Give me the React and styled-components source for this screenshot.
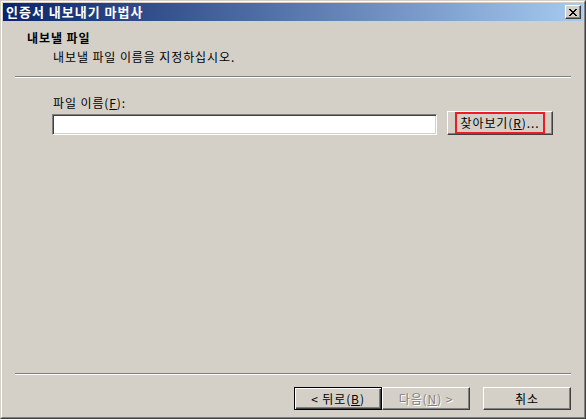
import React from "react";
import styled, { createGlobalStyle, css } from "styled-components";

const Global = createGlobalStyle`
  html, body { margin: 0; padding: 0; background: #d4d0c8; }
  body { font-family: "Noto Sans CJK KR", "Noto Sans", sans-serif; font-size: 12px; color: #000; letter-spacing: 0.9px; }
  * { box-sizing: border-box; }
`;

const Window = styled.div`
  width: 586px;
  height: 419px;
  border: 1px solid;
  border-color: #d4d0c8 #404040 #404040 #d4d0c8;
  background: #d4d0c8;
`;

const Inner = styled.div`
  height: 100%;
  border: 1px solid;
  border-color: #ffffff #808080 #808080 #ffffff;
  padding: 1px;
  display: flex;
  flex-direction: column;
`;

const TitleBar = styled.div`
  height: 18px;
  flex: none;
  display: flex;
  align-items: center;
  justify-content: space-between;
  padding: 0 2px 0 3px;
  background: linear-gradient(to right, #0a246a, #a6caf0);
`;

const Title = styled.span`
  color: #fff;
  font-weight: bold;
  font-size: 13px;
  line-height: 18px;
  letter-spacing: 1px;
`;

const CloseButton = styled.div`
  width: 16px;
  height: 14px;
  background: #d4d0c8;
  border: 1px solid;
  border-color: #ffffff #404040 #404040 #ffffff;
  box-shadow: inset -1px -1px 0 #808080;
  display: flex;
  align-items: center;
  justify-content: center;
`;

const Header = styled.div`
  flex: none;
  padding: 9px 0 11px 24px;
`;

const HeaderTitle = styled.div`
  font-weight: bold;
  line-height: 16px;
`;

const HeaderSub = styled.div`
  margin-top: 3px;
  padding-left: 26px;
  line-height: 16px;
`;

const Separator = styled.div`
  flex: none;
  margin: 0 12px;
  height: 2px;
  border-top: 1px solid #808080;
  border-bottom: 1px solid #ffffff;
`;

const Body = styled.div`
  flex: 1;
  padding: 17px 0 0 49px;
`;

const Label = styled.div`
  line-height: 16px;
  padding-left: 1px;
`;

const FieldRow = styled.div`
  display: flex;
  align-items: flex-start;
  gap: 10px;
`;

const TextInput = styled.div`
  margin-top: 3px;
  width: 385px;
  height: 21px;
  background: #fff;
  border: 1px solid;
  border-color: #808080 #ffffff #ffffff #808080;
  box-shadow: inset 1px 1px 0 #404040, inset -1px -1px 0 #d4d0c8;
`;

const Button = styled.div`
  width: ${(p) => p.$w || 88}px;
  height: ${(p) => p.$h || 23}px;
  display: flex;
  align-items: center;
  justify-content: center;
  line-height: 16px;
  background: #d4d0c8;
  border: 1px solid;
  border-color: #ffffff #404040 #404040 #ffffff;
  box-shadow: inset -1px -1px 0 #808080;
  ${(p) =>
    p.$default &&
    css`
      border-color: #000;
      box-shadow: inset 1px 1px 0 #ffffff, inset -1px -1px 0 #404040, inset -2px -2px 0 #808080;
    `}
  ${(p) =>
    p.$disabled &&
    css`
      color: #808080;
      text-shadow: 1px 1px 0 #ffffff;
    `}
`;

const FocusMark = styled.div`
  width: 90px;
  height: 22px;
  margin-top: -1px;
  border: 2px solid #ed1c24;
  display: flex;
  align-items: center;
  justify-content: center;
`;

const Footer = styled.div`
  flex: none;
  display: flex;
  justify-content: flex-end;
  padding: 12px 12px 6px 0;
`;

const Pair = styled.div`
  display: flex;
  margin-right: 13px;
`;

export default function App() {
  return (
    <>
      <Global />
      <Window>
        <Inner>
          <TitleBar>
            <Title>인증서 내보내기 마법사</Title>
            <CloseButton>
              <svg width="8" height="7" viewBox="0 0 8 7" shapeRendering="crispEdges">
                <path
                  d="M0 0h2v1h-2zM6 0h2v1h-2zM1 1h2v1h-2zM5 1h2v1h-2zM2 2h4v1h-4zM3 3h2v1h-2zM2 4h4v1h-4zM1 5h2v1h-2zM5 5h2v1h-2zM0 6h2v1h-2zM6 6h2v1h-2z"
                  fill="#000"
                />
              </svg>
            </CloseButton>
          </TitleBar>
          <Header>
            <HeaderTitle>내보낼 파일</HeaderTitle>
            <HeaderSub>내보낼 파일 이름을 지정하십시오.</HeaderSub>
          </Header>
          <Separator />
          <Body>
            <Label>
              파일 이름(<u>F</u>):
            </Label>
            <FieldRow>
              <TextInput />
              <Button $w={106} $h={24}>
                <FocusMark>
                  찾아보기(<u>R</u>)...
                </FocusMark>
              </Button>
            </FieldRow>
          </Body>
          <Separator />
          <Footer>
            <Pair>
              <Button $default>
                &lt; 뒤로(<u>B</u>)
              </Button>
              <Button $disabled>
                다음(<u>N</u>) &gt;
              </Button>
            </Pair>
            <Button>취소</Button>
          </Footer>
        </Inner>
      </Window>
    </>
  );
}
